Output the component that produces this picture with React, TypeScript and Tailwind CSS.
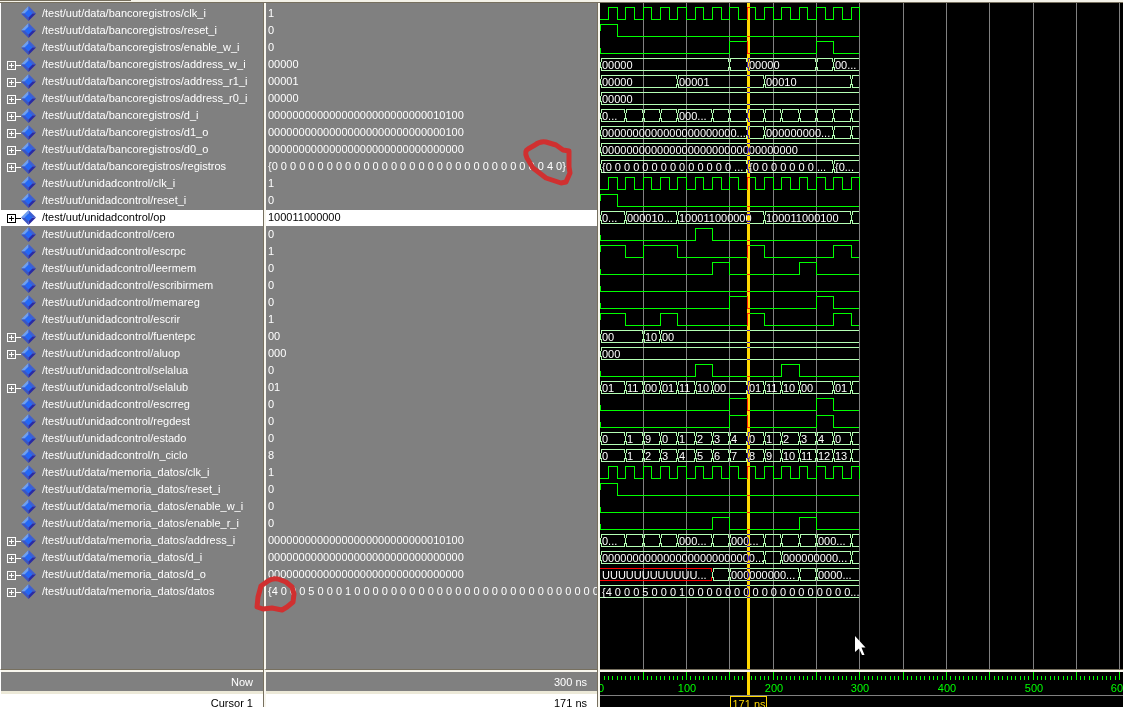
type Seg = [number, string?];
type Signal = {
  name: string;
  value: string;
  kind: "clock" | "bit" | "bus";
  pulses?: [number, number][];
  segments?: Seg[];
  unknownUntil?: number;
  selected?: boolean;
  plain?: boolean;
};

const zeros = (n: number) => "0".repeat(n);
const spaced = (n: number) => Array(n).fill("0").join(" ");

const BANK = "/test/uut/data/bancoregistros/";
const CTRL = "/test/uut/unidadcontrol/";
const MEM = "/test/uut/data/memoria_datos/";

const clock = (name: string): Signal => ({ name, value: "1", kind: "clock" });
const bit = (name: string, value: string, pulses: [number, number][]): Signal => ({ name, value, kind: "bit", pulses });
const bus = (name: string, value: string, segments: Seg[], extra: Partial<Signal> = {}): Signal => ({
  name,
  value,
  kind: "bus",
  segments,
  ...extra,
});

const signals: Signal[] = [
  clock(BANK + "clk_i"),
  bit(BANK + "reset_i", "0", [[0, 20]]),
  bit(BANK + "enable_w_i", "0", [[150, 170], [250, 270]]),
  bus(BANK + "address_w_i", "00000", [[0, "00000"], [150], [170, "00000"], [250], [270, "00..."]]),
  bus(BANK + "address_r1_i", "00001", [[0, "00000"], [90, "00001"], [190, "00010"], [290]]),
  bus(BANK + "address_r0_i", "00000", [[0, "00000"]]),
  bus(BANK + "d_i", zeros(27) + "10100", [
    [0, "0..."], [30], [50], [70], [90, "000..."], [130], [150], [170], [190], [210], [230], [250], [270], [290],
  ]),
  bus(BANK + "d1_o", zeros(29) + "100", [[0, zeros(22) + "..."], [170], [190, zeros(9) + "..."], [270], [290]]),
  bus(BANK + "d0_o", zeros(32), [[0, zeros(32)]]),
  bus(BANK + "registros", "{" + spaced(30) + " 4 0}", [
    [0, "{" + spaced(14) + " ..."], [170, "{" + spaced(7) + " ..."], [270, "{0..."],
  ]),
  clock(CTRL + "clk_i"),
  bit(CTRL + "reset_i", "0", [[0, 20]]),
  bus(CTRL + "op", "100011000000", [
    [0, "0..."], [30, "000010..."], [90, "100011000000"], [190, "100011000100"], [290],
  ], { selected: true }),
  bit(CTRL + "cero", "0", [[110, 130]]),
  bit(CTRL + "escrpc", "1", [[0, 30], [50, 90], [170, 190], [270, 290]]),
  bit(CTRL + "leermem", "0", [[130, 150], [230, 250]]),
  bit(CTRL + "escribirmem", "0", []),
  bit(CTRL + "memareg", "0", [[150, 170], [250, 270]]),
  bit(CTRL + "escrir", "1", [[0, 30], [70, 90], [170, 190], [270, 290]]),
  bus(CTRL + "fuentepc", "00", [[0, "00"], [50, "10"], [70, "00"]]),
  bus(CTRL + "aluop", "000", [[0, "000"]]),
  bit(CTRL + "selalua", "0", [[110, 130], [210, 230]]),
  bus(CTRL + "selalub", "01", [
    [0, "01"], [30, "11"], [50, "00"], [70, "01"], [90, "11"], [110, "10"], [130, "00"],
    [170, "01"], [190, "11"], [210, "10"], [230, "00"], [270, "01"], [290],
  ]),
  bit(CTRL + "escrreg", "0", [[150, 170], [250, 270]]),
  bit(CTRL + "regdest", "0", [[150, 170], [250, 270]]),
  bus(CTRL + "estado", "0", [
    [0, "0"], [30, "1"], [50, "9"], [70, "0"], [90, "1"], [110, "2"], [130, "3"], [150, "4"],
    [170, "0"], [190, "1"], [210, "2"], [230, "3"], [250, "4"], [270, "0"], [290],
  ], { plain: true }),
  bus(CTRL + "n_ciclo", "8", [
    [0, "0"], [30, "1"], [50, "2"], [70, "3"], [90, "4"], [110, "5"], [130, "6"], [150, "7"],
    [170, "8"], [190, "9"], [210, "10"], [230, "11"], [250, "12"], [270, "13"], [290],
  ], { plain: true }),
  clock(MEM + "clk_i"),
  bit(MEM + "reset_i", "0", [[0, 20]]),
  bit(MEM + "enable_w_i", "0", []),
  bit(MEM + "enable_r_i", "0", [[130, 150], [230, 250]]),
  bus(MEM + "address_i", zeros(27) + "10100", [
    [0, "0..."], [30], [50], [70], [90, "000..."], [130], [150, "000..."], [190], [210], [230], [250, "000..."], [290],
  ]),
  bus(MEM + "d_i", zeros(32), [[0, zeros(25) + "..."], [190], [210, zeros(9) + "..."], [290]]),
  bus(MEM + "d_o", zeros(32), [
    [0, "UUUUUUUUUUUU..."], [130], [150, zeros(9) + "..."], [230], [250, "0000..."],
  ], { unknownUntil: 130 }),
  bus(MEM + "datos", "{4 0 0 0 5 0 0 0 1 " + spaced(27), [[0, "{4 0 0 0 5 0 0 0 1 " + spaced(18) + "..."]]),
];

const ROW = 17;
const END = 300;
const CURSOR = 171;
const px = (t: number) => Math.floor(t * 0.866);

function Diamond() {
  return (
    <svg width="15" height="15" viewBox="0 0 15 15" className="block shrink-0">
      <path d="M7.500 0L0 7.500H7.500Z" fill="#6f9ff0" />
      <path d="M7.500 0L15 7.500H7.500Z" fill="#3f5fd0" />
      <path d="M0 7.500L7.500 15V7.500Z" fill="#3a55c4" />
      <path d="M15 7.500L7.500 15V7.500Z" fill="#2a2aa4" />
      <path d="M7.500 3.500L11.500 7.500L7.500 11.500L3.500 7.500Z" fill="#2468f6" />
    </svg>
  );
}

function ExpandBox() {
  return (
    <svg width="14" height="15" viewBox="0 0 14 15" shapeRendering="crispEdges" fill="none" stroke="currentColor" className="block">
      <rect x="0.500" y="4.500" width="8" height="8" />
      <path d="M2 8.500H7M4.500 6V11M9 8.500H14" />
    </svg>
  );
}

function bitPath(pulses: [number, number][], y: number, tick: boolean) {
  const hi = y + 1.5;
  const lo = y + 13.5;
  const startsHigh = pulses.length > 0 && pulses[0][0] === 0;
  let d = tick ? `M0.5 ${startsHigh ? hi + 6 : lo - 6}V${startsHigh ? hi : lo}` : `M0 ${lo}`;
  for (const [a, b] of pulses) {
    if (a > 0) d += `H${px(a) + 0.5}V${hi}`;
    d += `H${px(b) + 0.5}V${lo}`;
  }
  return d + `H${px(END)}`;
}

const clockPulses = Array.from({ length: 15 }, (_, i): [number, number] => [10 + i * 20, 20 + i * 20]);

function BusWave({ signal, y }: { signal: Signal; y: number }) {
  const hi = y + 1.5;
  const lo = y + 13.5;
  const segments = signal.segments ?? [];
  const isArray = signal.name.endsWith("/datos");
  return (
    <g>
      {segments.map(([t, label], i) => {
        const next = i + 1 < segments.length ? segments[i + 1][0] : END;
        const last = i + 1 === segments.length;
        const x0 = px(t) + 1.5;
        const x1 = last ? px(next) : px(next) - 0.5;
        const unknown = signal.unknownUntil !== undefined && t < signal.unknownUntil;
        const square = isArray || unknown;
        const left = square ? `M0 ${hi}` : `M${x0 - 1} ${lo - 3}V${hi + 3}M${x0} ${hi + 3.5}V${hi}`;
        const bottomLeft = square ? `M0 ${lo}` : `M${x0} ${lo - 3.5}V${lo}`;
        const right = last ? `H${x1}` : `H${x1}V${hi + 3.5}`;
        const bottomRight = last ? `H${x1}` : `H${x1}V${lo - 3.5}`;
        return (
          <g key={t}>
            <path d={left + right + bottomLeft + bottomRight} fill="none" stroke={unknown ? "#ff0000" : "#b4ffb4"} />
            {label && (
              <text x={px(t) + 2} y={y + 12} fill="#ffffff">
                {label}
              </text>
            )}
          </g>
        );
      })}
    </g>
  );
}

function Waveforms() {
  return (
    <svg className="block h-full w-full text-[11px]" shapeRendering="crispEdges" role="img" aria-label="Waveforms">
      {Array.from({ length: 24 }, (_, i) => (
        <rect key={i} x={px((i + 1) * 50)} y="0" width="1" height="100%" fill="#808080" />
      ))}
      {signals.map((s, i) => {
        const y = 3 + i * ROW;
        if (s.kind === "bus") return <BusWave key={s.name} signal={s} y={y} />;
        const pulses = s.kind === "clock" ? clockPulses : s.pulses ?? [];
        return <path key={s.name} d={bitPath(pulses, y, s.kind === "bit")} fill="none" stroke="#00ff00" />;
      })}
      <rect x={px(CURSOR) - 1} y="0" width="3" height="100%" fill="#ffd800" className="mix-blend-difference" />
      <path d="M255 633V649L259 645.500L262 652H264.500L261.500 644.500H265.500Z" fill="#ffffff" shapeRendering="auto" />
    </svg>
  );
}

function Ruler() {
  return (
    <svg className="block h-full w-full text-[11px]" shapeRendering="crispEdges" role="img" aria-label="Time scale">
      {Array.from({ length: 240 }, (_, i) => {
        const t = (i + 1) * 5;
        const major = t % 50 === 0;
        return <rect key={t} x={px(t)} y={major ? 0 : 4} width="1" height={major ? 8 : 4} fill="#00ff00" />;
      })}
      {Array.from({ length: 13 }, (_, i) => (
        <text key={i} x={px(i * 100) + 1} y="20" textAnchor="middle" fill="#00ff00">
          {i * 100}
        </text>
      ))}
      <rect x="0" y="23" width="100%" height="1" fill="#808080" />
      <rect x={px(CURSOR) - 1} y="0" width="3" height="23" fill="#ffd800" />
      <rect x="130.500" y="24.500" width="36" height="16" fill="#000000" stroke="#ffd800" />
      <text x={px(CURSOR) + 1} y="36" textAnchor="middle" fill="#ffd800">
        171 ns
      </text>
    </svg>
  );
}

function Markers() {
  return (
    <svg
      className="pointer-events-none absolute inset-0 h-full w-full"
      fill="none"
      stroke="#d03030"
      strokeWidth="5"
      strokeLinejoin="round"
      strokeLinecap="round"
    >
      <path d="M535 145Q540 141 546 142L556 145L563 150L569 151V167L570 173L566 182L561 183L546 178L533 168L527 158Q524 151 528 149L535 145" />
      <path d="M268 581Q272 578 278 579L286 582L292 587L294 594L293 602L287 607L282 610L272 608L263 609L257 607L258 597L261 586L268 581" />
    </svg>
  );
}

const nameCell = "border-l border-l-white border-r border-r-[#77705f] p-0";
const valueCell = "border-l-2 border-l-[#f8f6ee] border-r border-r-[#77705f] p-0";

export default function App() {
  return (
    <main className="relative flex h-screen flex-col overflow-hidden bg-[#808080] font-['Liberation_Sans',Arial,sans-serif] text-[11px] text-white">
      <div className="h-[3px] shrink-0 border-b border-b-[#77705f] bg-[#f4f2e8]">
        <div className="h-px w-[131px] bg-[#77705f]" />
      </div>
      <div className="flex min-h-0 flex-1">
        <table className="h-full w-[598px] shrink-0 table-fixed border-separate border-spacing-0">
          <colgroup>
            <col className="w-[264px]" />
            <col />
          </colgroup>
          <tbody>
            <tr className="h-[3px]">
              <td className={nameCell} />
              <td className={valueCell} />
            </tr>
            {signals.map((s) => (
              <tr key={s.name} className="h-[17px]">
                <th scope="row" className={`${nameCell} text-left align-top font-normal`}>
                  <div className={`flex h-4 pl-[6px] ${s.selected ? "bg-white text-black" : ""}`}>
                    <div className="w-[14px] shrink-0">
                      {s.kind === "bus" && !s.plain && (
                        <button type="button" aria-label={`Expand ${s.name}`} className="block">
                          <ExpandBox />
                        </button>
                      )}
                    </div>
                    <Diamond />
                    <span className="ml-[6px] whitespace-nowrap leading-[14px]">{s.name}</span>
                  </div>
                </th>
                <td className={`${valueCell} align-top`}>
                  <div
                    className={`h-4 overflow-hidden whitespace-nowrap pl-[2px] leading-[14px] ${s.selected ? "bg-white text-black" : ""}`}
                  >
                    {s.value}
                  </div>
                </td>
              </tr>
            ))}
            <tr>
              <td className={nameCell} />
              <td className={valueCell} />
            </tr>
          </tbody>
          <tfoot className="text-right">
            <tr className="h-[25px]">
              <th scope="row" className={`${nameCell} border-t border-t-[#77705f] text-right font-normal`}>
                <div className="h-6 border-t-2 border-b-[3px] border-t-[#f8f6ee] border-b-[#ece9d8] pr-[10px] leading-[20px]">
                  Now
                </div>
              </th>
              <td className={`${valueCell} border-t border-t-[#77705f]`}>
                <div className="h-6 border-t-2 border-b-[3px] border-t-[#f8f6ee] border-b-[#ece9d8] pr-[10px] leading-[20px]">
                  300 ns
                </div>
              </td>
            </tr>
            <tr className="h-[13px] bg-white text-black">
              <th scope="row" className={`${nameCell} text-right font-normal`}>
                <div className="h-[13px] overflow-hidden pr-[10px] leading-[18px]">Cursor 1</div>
              </th>
              <td className={valueCell}>
                <div className="h-[13px] overflow-hidden pr-[10px] leading-[18px]">171 ns</div>
              </td>
            </tr>
          </tfoot>
        </table>
        <div className="flex min-w-0 flex-1 flex-col border-l-2 border-l-[#f8f6ee] bg-black">
          <div className="min-h-0 flex-1 overflow-hidden">
            <Waveforms />
          </div>
          <div className="h-[38px] shrink-0 overflow-hidden border-t border-t-[#77705f]">
            <div className="h-full border-t-2 border-t-[#f8f6ee]">
              <Ruler />
            </div>
          </div>
        </div>
      </div>
      <Markers />
    </main>
  );
}
